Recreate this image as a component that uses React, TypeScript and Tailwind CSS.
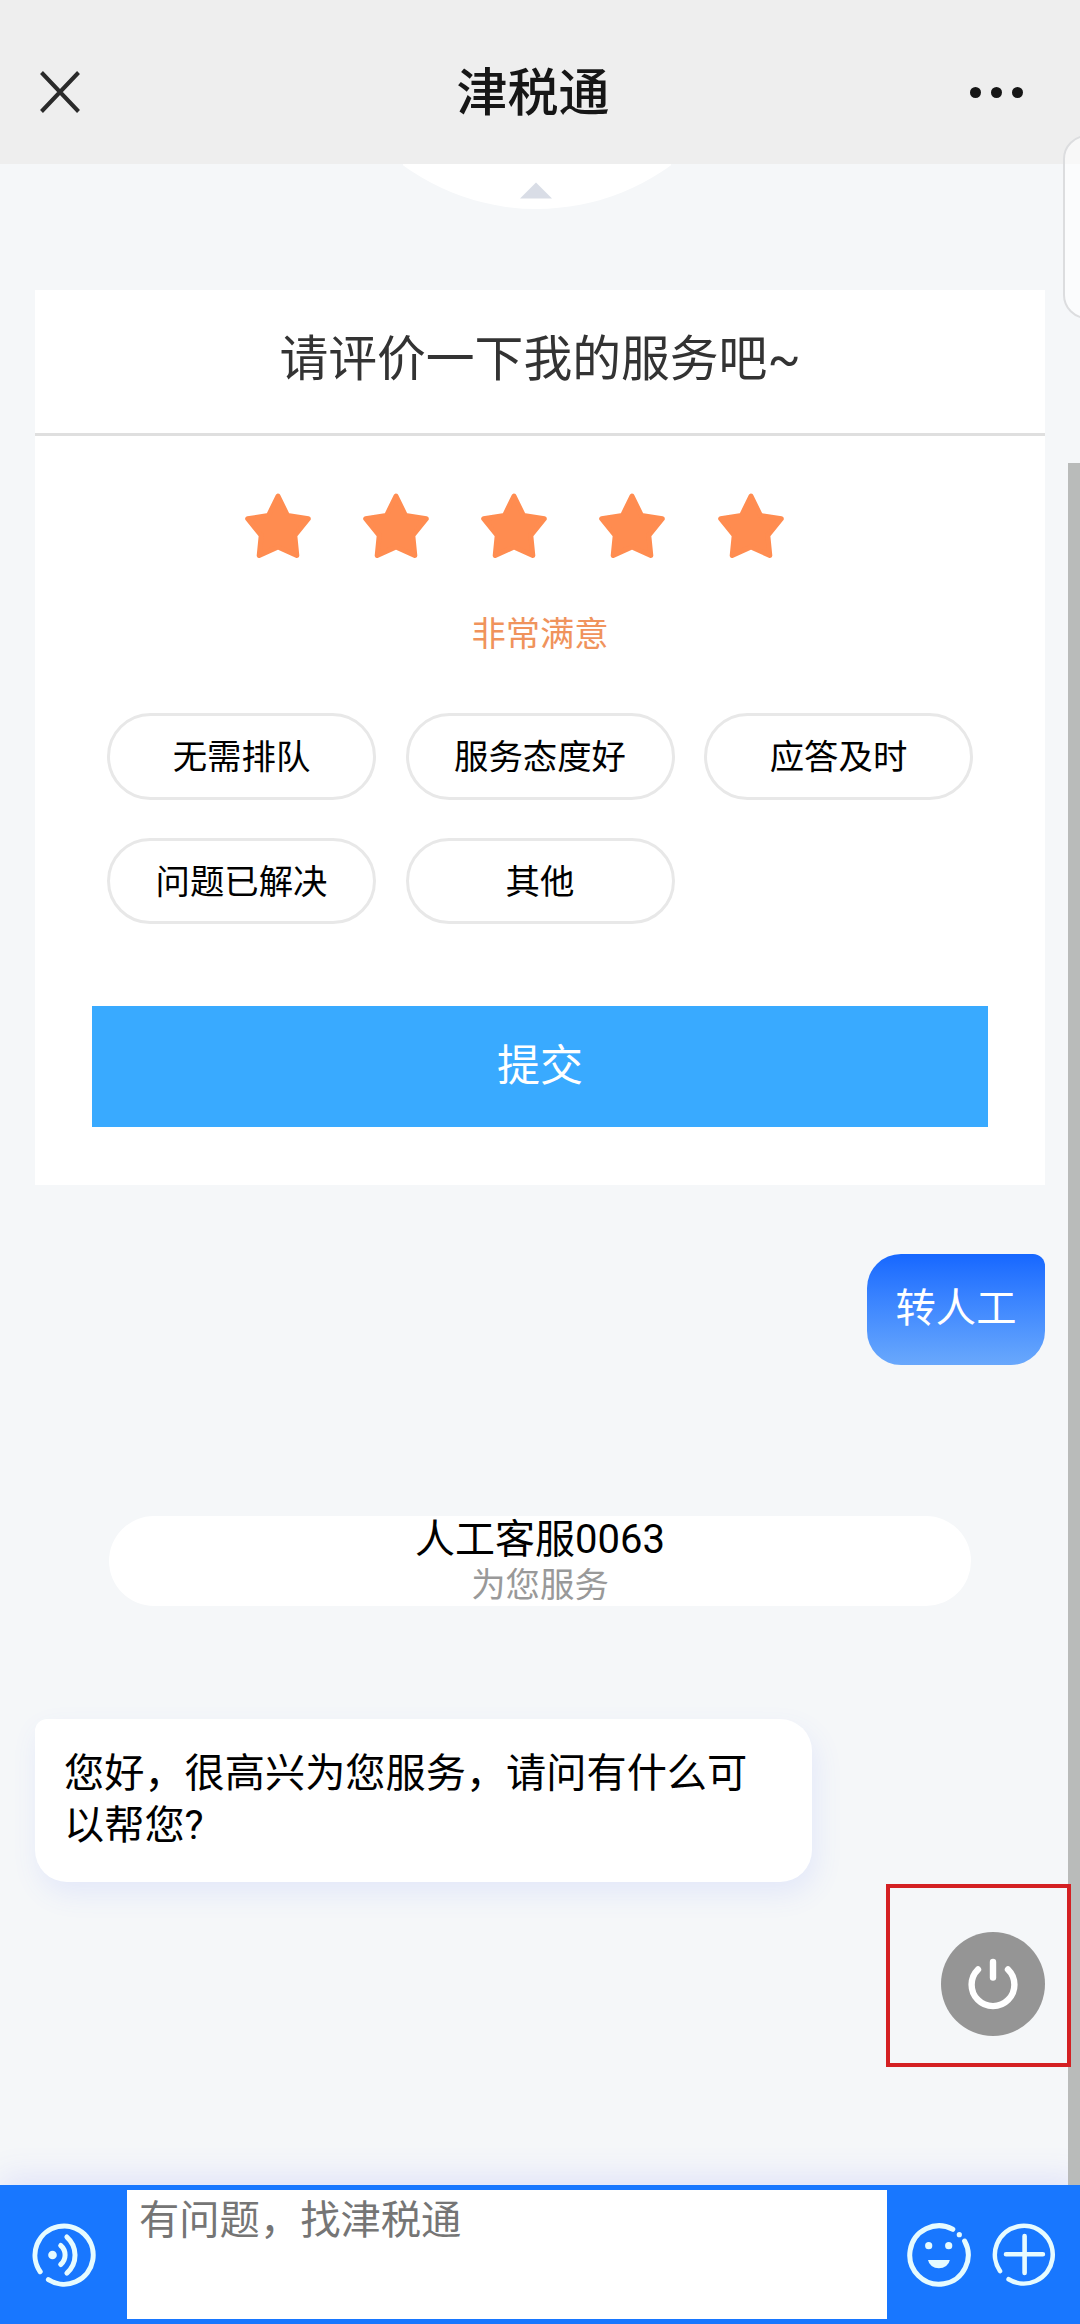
import { useState } from "react";

const reasons = ["无需排队", "服务态度好", "应答及时", "问题已解决", "其他"];

const Star = ({ active }: { active: boolean }) => (
  <svg
    className="w-[66px] h-[66px]"
    viewBox="0 0 66 66"
    fill={active ? "#ff8c50" : "#dddddd"}
    stroke={active ? "#ff8c50" : "#dddddd"}
    strokeWidth="5"
    strokeLinejoin="round"
  >
    <path d="M33 3 L42.5 22.5 L63.3 25.8 L49.8 42.5 L51.8 62.5 L33 54 L14.2 62.5 L16.2 42.5 L2.7 25.8 L23.5 22.5 Z" />
  </svg>
);

const VoiceIcon = () => (
  <svg
    className="w-16 h-16"
    viewBox="-32 -32 64 64"
    fill="none"
    stroke="#e6fbff"
    strokeWidth="5"
    strokeLinecap="round"
  >
    <path d="M-23.8 16.7 A29.1 29.1 0 1 1 -15.6 24.6" />
    <circle cx="-11.5" cy="0" r="4.3" fill="#e6fbff" stroke="none" />
    <path d="M-3.3 -9.5 A12.5 12.5 0 0 1 -3.3 9.5" />
    <path d="M2.9 -18 A24 24 0 0 1 2.9 18" />
  </svg>
);

const SmileIcon = () => (
  <svg
    className="w-16 h-16"
    viewBox="-32 -32 64 64"
    fill="none"
    stroke="#e6fbff"
    strokeWidth="5"
    strokeLinecap="round"
  >
    <path d="M13.8 -25.7 A29.2 29.2 0 1 0 25.6 -14" />
    <g fill="#e6fbff" stroke="none">
      <circle cx="20.3" cy="-20.3" r="2.6" />
      <circle cx="-10.3" cy="-9.3" r="3.6" />
      <circle cx="9.7" cy="-9.3" r="3.6" />
      <path d="M-11 5 H10.8 A11 9.6 0 0 1 -11 5 Z" />
    </g>
  </svg>
);

const PlusIcon = () => (
  <svg
    className="w-16 h-16"
    viewBox="-32 -32 64 64"
    fill="none"
    stroke="#e6fbff"
    strokeWidth="4.6"
    strokeLinecap="round"
  >
    <path d="M-24 16 A28.9 28.9 0 1 1 -15.4 24.2" />
    <path d="M-18 -0.7 H18.9 M0.6 -19 V18" />
  </svg>
);

const App = () => {
  const [score, setScore] = useState<number>(5);
  const [message, setMessage] = useState<string>("");
  return (
    <div className="relative flex flex-col w-[1080px] h-[2324px] overflow-hidden bg-[#f5f7f9] text-black font-['Roboto','Noto_Sans_CJK_SC',sans-serif]">
      <header className="h-[164px] shrink-0 flex items-center justify-between bg-[#eeeeee] pt-5 pl-10 pr-[57px]">
        <svg
          className="w-10 h-[42px]"
          viewBox="0 0 40 42"
          stroke="#2a2a2a"
          strokeWidth="4"
        >
          <path d="M1.5 1.5 L38.5 40.5 M38.5 1.5 L1.5 40.5" />
        </svg>
        <h1 className="pt-[3px] pl-4 text-[51px] leading-[60px] font-medium text-[#161616]">
          津税通
        </h1>
        <div className="flex gap-[10px]">
          <span className="size-[11px] rounded-full bg-[#161616]" />
          <span className="size-[11px] rounded-full bg-[#161616]" />
          <span className="size-[11px] rounded-full bg-[#161616]" />
        </div>
      </header>

      <main className="flex-1 flex flex-col pl-[35px] pr-[35px]">
        <svg
          className="w-[268px] h-[46px] ml-[368px] shrink-0"
          viewBox="0 0 268 46"
        >
          <ellipse cx="134" cy="-171" rx="222" ry="216" fill="#ffffff" />
          <path d="M117 34.5 L133 18.5 L149 34.5 Z" fill="#d9dde6" />
        </svg>

        {/* rating card */}
        <section className="mt-[80px] h-[895px] shrink-0 bg-white">
          <h2 className="h-[146px] pb-[3px] flex items-center justify-center border-b-3 border-[#dfdfdf] text-[48.8px] text-[#333333]">
            请评价一下我的服务吧~
          </h2>
          <div className="flex gap-[52.3px] pl-[209.5px] pt-[57px]">
            {[1, 2, 3, 4, 5].map((n) => (
              <button key={n} onClick={() => setScore(n)}>
                <Star active={n <= score} />
              </button>
            ))}
          </div>
          <p className="mt-[50px] text-center text-[34.3px] leading-[50px] text-[#f0935c]">
            非常满意
          </p>
          <div className="mt-[54px] ml-[72px] grid grid-cols-[269px_269px_269px] gap-x-[29.5px] gap-y-[38px]">
            {reasons.map((reason) => (
              <button
                key={reason}
                className="h-[86.5px] pt-1 border-3 border-[#e8e8e8] rounded-full text-[34.4px]"
              >
                {reason}
              </button>
            ))}
          </div>
          <button className="mt-[82px] ml-[57px] w-[896px] h-[121px] block bg-[#39aaff] text-[43px] text-white">
            提交
          </button>
        </section>

        <div className="mt-[69px] self-end w-[178px] h-[111px] shrink-0 flex items-center justify-center rounded-[34px] rounded-tr-[12px] bg-linear-to-b from-[#1667ff] to-[#69a8fc] text-[40.3px] text-white pb-px">
          转人工
        </div>

        <div className="mt-[151px] mx-[74px] h-[90px] pt-px shrink-0 rounded-[45px] bg-white text-center">
          <p className="text-[40px] leading-[46px]">人工客服0063</p>
          <p className="text-[34.4px] leading-[44px] text-[#999999]">
            为您服务
          </p>
        </div>

        <div className="mt-[113px] w-[777px] h-[163px] shrink-0 rounded-[32px] rounded-tl-[12px] bg-white shadow-[4px_12px_28px_rgba(80,110,255,0.1)] pl-[29px] pr-[50px] pt-[29px] text-[40.2px] leading-[52.3px]">
          您好，很高兴为您服务，请问有什么可以帮您?
        </div>
      </main>

      <footer className="h-[139px] shrink-0 flex items-center bg-[#1877ff] pl-8 pr-6 shadow-[0_-8px_30px_rgba(90,90,255,0.13)]">
        <VoiceIcon />
        <textarea
          className="ml-[31px] mr-[20px] w-[760px] h-[129px] shrink-0 resize-none outline-none bg-white pl-[12px] pt-[5px] text-[40.3px] leading-[52px] placeholder:text-[#757575]"
          placeholder="有问题，找津税通"
          value={message}
          onChange={(e) => setMessage(e.target.value)}
        />
        <div className="flex gap-[21px]">
          <SmileIcon />
          <PlusIcon />
        </div>
      </footer>

      {/* page scrollbar */}
      <div className="absolute right-0 top-[463px] w-[12px] h-[1722px] bg-[#b9bbba]" />

      {/* edge handle of the side panel */}
      <div className="absolute left-[1063px] top-[135px] w-12 h-[184px] rounded-[30px] border-2 border-[#dcdddf] bg-white/60" />

      {/* end session */}
      <div className="absolute left-[886px] top-[1884px] w-[185px] h-[183px] border-4 border-[#d42023]">
        <button className="absolute left-[51px] top-[44px] size-[104px] rounded-full bg-[#959595]">
          <svg
            className="size-[104px]"
            viewBox="-52 -52 104 104"
            fill="none"
            stroke="#ffffff"
            strokeWidth="6.4"
            strokeLinecap="round"
          >
            <path d="M-15 -14.5 A21.4 21.4 0 1 0 15 -14.5" />
            <path d="M0 -22 V-6.5" />
          </svg>
        </button>
      </div>
    </div>
  );
};

export default App;
